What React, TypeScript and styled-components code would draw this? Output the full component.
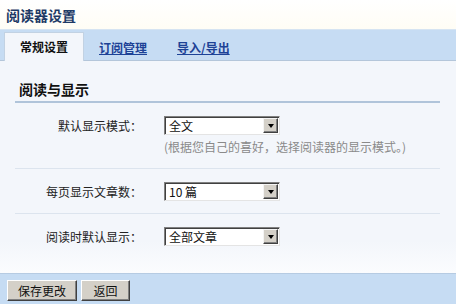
import React from "react";
import styled, { createGlobalStyle } from "styled-components";

const GlobalStyle = createGlobalStyle`
  html, body {
    margin: 0;
    padding: 0;
    background: #fff;
  }
  body {
    font-family: "Noto Sans CJK SC", "DejaVu Sans", sans-serif;
    font-size: 12px;
    color: #222;
  }
`;

const Page = styled.div`
  width: 456px;
  height: 304px;
  display: flex;
  flex-direction: column;
  overflow: hidden;
`;

const Header = styled.div`
  height: 29px;
  flex: none;
  display: flex;
  align-items: center;
  padding-left: 6px;
  background: linear-gradient(#ffffff, #fffdf5);
`;

const PageTitle = styled.h1`
  margin: 0;
  font-size: 14px;
  font-weight: bold;
  color: #1e3a66;
  line-height: 1;
`;

const TabBar = styled.div`
  height: 30px;
  flex: none;
  display: flex;
  align-items: flex-end;
  padding-left: 4px;
  background: #c6dcf3;
  border-top: 1px solid #d6e4f2;
  border-bottom: 1px solid #b4c6da;
`;

const Tab = styled.a<{ $active?: boolean }>`
  height: ${(p) => (p.$active ? "27px" : "26px")};
  display: flex;
  align-items: center;
  justify-content: center;
  font-weight: bold;
  font-size: 12px;
  cursor: pointer;
  ${(p) =>
    p.$active
      ? `
    width: 78px;
    background: #f3f6fb;
    color: #111;
    border: 1px solid #c2d2e3;
    border-bottom: none;
    margin-bottom: -1px;
    padding-bottom: 1px;
  `
      : `
    padding: 0 0 0 15px;
    margin-right: 15px;
    color: #1d4296;
    text-decoration: underline;
  `}
`;

const Content = styled.div`
  flex: 1;
  background: linear-gradient(#f3f6fb 85%, #fbfcfe);
  padding: 0 16px 0 15px;
`;

const SectionTitle = styled.h2`
  margin: 0;
  padding: 21px 0 4px 4px;
  font-size: 14px;
  font-weight: bold;
  color: #111;
  line-height: 15px;
  border-bottom: 2px solid #b0c4da;
`;

const Row = styled.div<{ $last?: boolean }>`
  display: grid;
  grid-template-columns: 127px auto;
  column-gap: 22px;
  row-gap: 3px;
  align-items: center;
  padding: 13px 0 ${(p) => (p.$last ? "0" : "12px")};
  border-bottom: ${(p) => (p.$last ? "none" : "1px solid #dce4ee")};
`;

const Label = styled.label`
  text-align: right;
  color: #222;
  font-size: 12px;
`;

const SelectBox = styled.div`
  width: 112px;
  height: 15px;
  display: flex;
  align-items: center;
  background: #fff;
  border-top: 1px solid #808080;
  border-left: 1px solid #808080;
  border-right: 1px solid #e4e4e4;
  border-bottom: 1px solid #e4e4e4;
  box-shadow: inset 1px 1px 0 #404040;
  padding: 1px;
`;

const SelectValue = styled.span`
  flex: 1;
  padding-left: 3px;
  font-size: 12px;
  color: #111;
  line-height: 15px;
`;

const ArrowButton = styled.span`
  width: 13px;
  height: 13px;
  display: flex;
  align-items: center;
  justify-content: center;
  background: #d4d0c8;
  border-top: 1px solid #f4f4f4;
  border-left: 1px solid #f4f4f4;
  border-right: 1px solid #404040;
  border-bottom: 1px solid #404040;
  box-shadow: inset -1px -1px 0 #808080;
`;

const Triangle = styled.span`
  width: 0;
  height: 0;
  border-left: 3.5px solid transparent;
  border-right: 3.5px solid transparent;
  border-top: 4px solid #000;
`;

const Hint = styled.div`
  grid-column: 2;
  color: #8a8a8a;
  font-size: 12px;
  white-space: nowrap;
  margin-bottom: 1px;
`;

const Footer = styled.div`
  height: 31px;
  flex: none;
  display: flex;
  align-items: center;
  gap: 4px;
  padding: 0 7px;
  background: #c6dcf3;
  border-top: 1px solid #b6cbe2;
  box-sizing: border-box;
`;

const Button = styled.button`
  height: 21px;
  min-width: 49px;
  padding: 0 10px;
  background: #d4d0c8;
  font-family: "Noto Sans CJK SC", sans-serif;
  font-size: 12px;
  color: #111;
  border-top: 1px solid #fff;
  border-left: 1px solid #fff;
  border-right: 1px solid #404040;
  border-bottom: 1px solid #404040;
  box-shadow: inset -1px -1px 0 #808080;
  margin-top: 2px;
`;

function Select({ value }: { value: string }) {
  return (
    <SelectBox>
      <SelectValue>{value}</SelectValue>
      <ArrowButton>
        <Triangle />
      </ArrowButton>
    </SelectBox>
  );
}

export default function App() {
  return (
    <>
      <GlobalStyle />
      <Page>
        <Header>
          <PageTitle>阅读器设置</PageTitle>
        </Header>
        <TabBar>
          <Tab $active>常规设置</Tab>
          <Tab>订阅管理</Tab>
          <Tab>导入/导出</Tab>
        </TabBar>
        <Content>
          <SectionTitle>阅读与显示</SectionTitle>
          <Row>
            <Label>默认显示模式：</Label>
            <Select value="全文" />
            <Hint>(根据您自己的喜好，选择阅读器的显示模式。)</Hint>
          </Row>
          <Row>
            <Label>每页显示文章数：</Label>
            <Select value="10 篇" />
          </Row>
          <Row $last>
            <Label>阅读时默认显示：</Label>
            <Select value="全部文章" />
          </Row>
        </Content>
        <Footer>
          <Button>保存更改</Button>
          <Button>返回</Button>
        </Footer>
      </Page>
    </>
  );
}
